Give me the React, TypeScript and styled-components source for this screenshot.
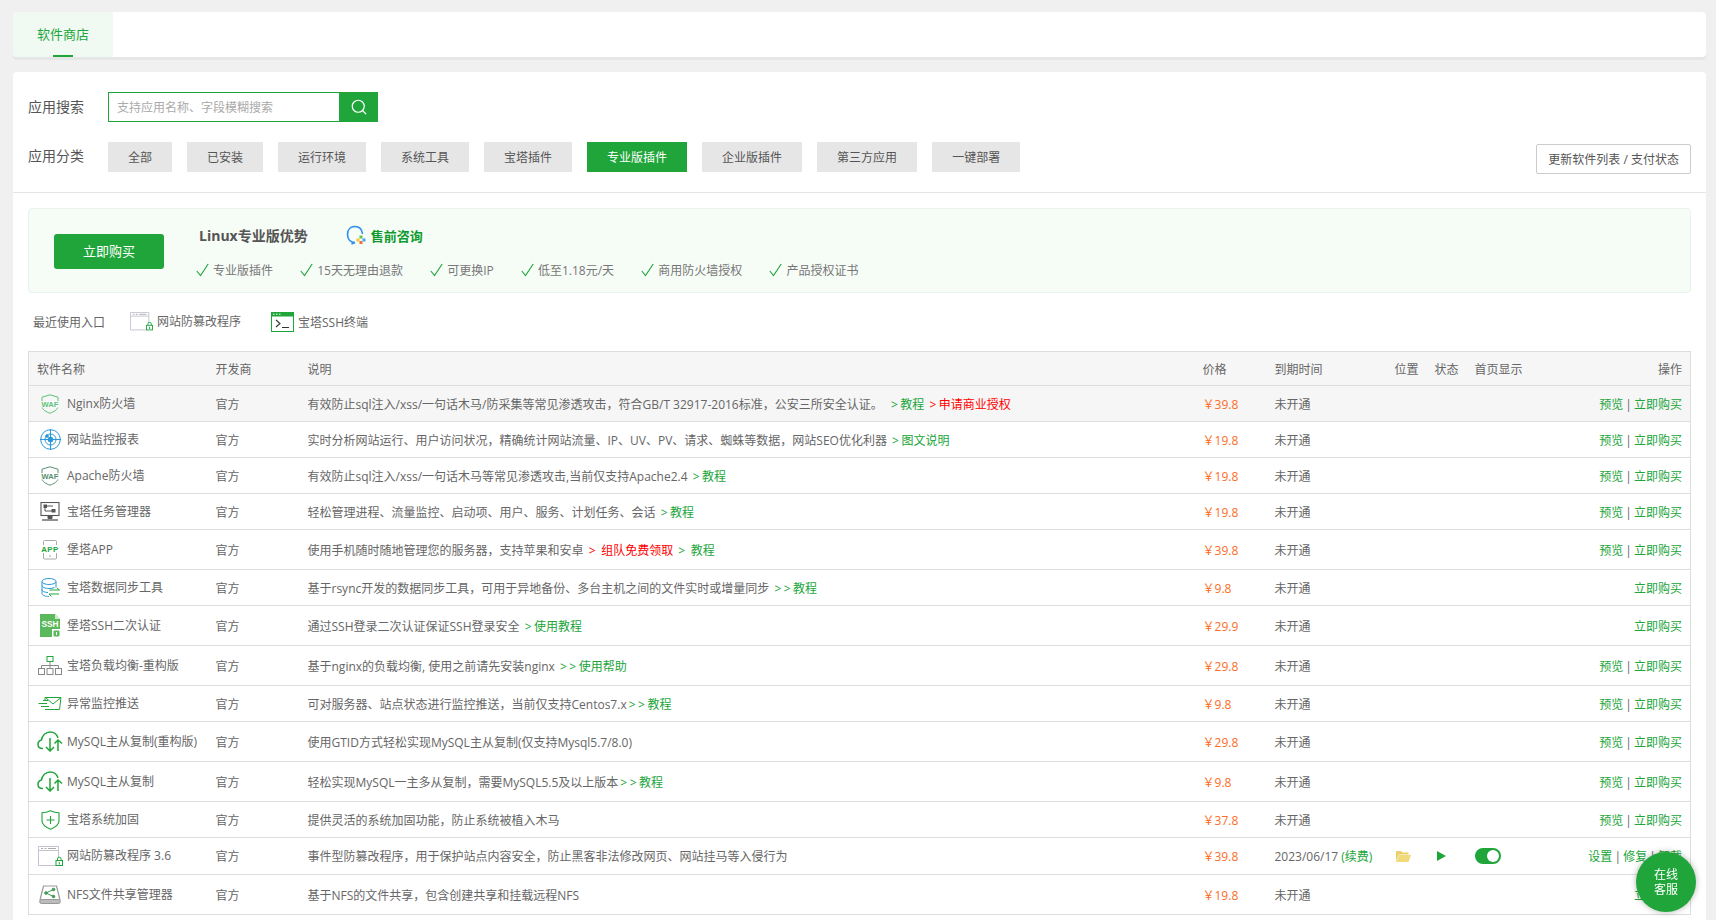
import { ReactNode } from "react";
import styled, { createGlobalStyle } from "styled-components";
import { Search } from "lucide-react";

const GREEN = "#20a53a";

const GlobalStyle = createGlobalStyle`
  html, body {
    margin: 0;
    height: 920px;
    overflow: hidden;
    background: #f0f0f0;
    color: #666;
    font-family: "Open Sans", "Noto Sans CJK SC", sans-serif;
    font-size: 12px;
  }
  * { box-sizing: border-box; }
`;

const Page = styled.div`
  padding: 12px 10px 0 13px;
`;

const TabCard = styled.div`
  height: 45px;
  background: #fff;
  border-radius: 4px;
  box-shadow: 0 3px 0 #e6e6e6;
  margin-bottom: 15px;
  overflow: hidden;
`;

const Tab = styled.div`
  position: relative;
  width: 100px;
  height: 45px;
  background: #f0f9f2;
  color: ${GREEN};
  font-size: 13px;
  line-height: 44px;
  text-align: center;
  &::after {
    content: "";
    position: absolute;
    left: 40px;
    bottom: 0;
    width: 20px;
    height: 2px;
    background: ${GREEN};
  }
`;

const MainCard = styled.div`
  background: #fff;
  border-radius: 4px 4px 0 0;
  height: 860px;
`;

const FilterBlock = styled.div`
  padding: 20px 15px 18px 15px;
  border-bottom: 1px solid #e4e4e4;
`;

const SearchRow = styled.div`
  display: flex;
  align-items: center;
  height: 30px;
  margin-bottom: 20px;
`;

const CategoryRow = styled.div`
  display: flex;
  align-items: flex-start;
  height: 32px;
`;

const RowLabel = styled.span`
  width: 80px;
  font-size: 14px;
  color: #555;
  padding-bottom: 2px;
`;

const CategoryLabel = styled(RowLabel)`
  padding-bottom: 0;
  line-height: 28px;
`;

const SearchBox = styled.div`
  display: flex;
  width: 270px;
  height: 30px;
  border: 1px solid ${GREEN};
`;

const SearchInput = styled.input`
  flex: 1;
  min-width: 0;
  border: 0;
  outline: 0;
  padding: 1px 0 0 8px;
  font: inherit;
  color: #666;
  &::placeholder {
    color: #aaa;
    opacity: 1;
  }
`;

const SearchButton = styled.div`
  width: 39px;
  margin: -1px -1px -1px 0;
  background: ${GREEN};
  color: #fff;
  display: flex;
  align-items: center;
  justify-content: center;
`;

const Categories = styled.div`
  display: flex;
  gap: 15px;
`;

const Category = styled.div<{ $active?: boolean }>`
  height: 30px;
  line-height: 31px;
  padding: 0 20px;
  background: ${(p) => (p.$active ? GREEN : "#e6e6e6")};
  color: ${(p) => (p.$active ? "#fff" : "#555")};
`;

const RefreshButton = styled.div`
  margin-left: auto;
  margin-top: 2px;
  height: 30px;
  line-height: 29px;
  padding: 0 11px;
  border: 1px solid #ccc;
  border-radius: 2px;
  color: #555;
  white-space: nowrap;
`;

const Content = styled.div`
  padding: 15px 15px 0;
`;

const Banner = styled.div`
  display: flex;
  align-items: center;
  height: 85px;
  padding: 1px 0 0 25px;
  background: #f6fcf6;
  border: 1px solid #e8f2ee;
  border-radius: 4px;
`;

const BuyButton = styled.div`
  width: 110px;
  height: 35px;
  line-height: 35px;
  text-align: center;
  background: ${GREEN};
  color: #fff;
  font-size: 13px;
  border-radius: 3px;
`;

const BannerInfo = styled.div`
  align-self: flex-start;
  margin: 15px 0 0 32px;
`;

const BannerTitleRow = styled.div`
  display: flex;
  align-items: center;
  height: 20px;
  padding-left: 3px;
  margin-bottom: 15px;
`;

const BannerTitle = styled.strong`
  font-size: 14px;
  color: #555;
  margin-right: 38px;
`;

const ConsultLink = styled.strong`
  font-size: 13px;
  color: #0f9a2e;
  margin-left: 5px;
`;

const Features = styled.div`
  display: flex;
  gap: 27.2px;
`;

const Feature = styled.div`
  display: flex;
  align-items: center;
  gap: 4px;
  height: 20px;
  color: #777;
`;

const RecentRow = styled.div`
  display: flex;
  align-items: center;
  height: 58px;
  padding: 0 0 1px 5px;
  color: #666;
`;

const RecentItem = styled.div`
  display: flex;
  align-items: center;
  gap: 4px;
  margin-left: 25px;
  padding-right: 5px;
`;

const Table = styled.table`
  width: 100%;
  table-layout: fixed;
  border-collapse: collapse;
  border: 1px solid #ddd;
`;

const HeadRow = styled.tr`
  height: 34px;
  background: #f6f6f6;
  border-bottom: 1px solid #ddd;
`;

const Row = styled.tr<{ $height: number; $hover?: boolean }>`
  height: ${(p) => p.$height}px;
  background: ${(p) => (p.$hover ? "#f6f6f6" : "#fff")};
  border-bottom: 1px solid #ddd;
`;

const Th = styled.th<{ $right?: boolean }>`
  padding: 0 8px;
  font-weight: 400;
  color: #666;
  text-align: ${(p) => (p.$right ? "right" : "left")};
  white-space: nowrap;
`;

const Td = styled.td`
  padding: 0 8px;
  color: #666;
  white-space: nowrap;
`;

const ActionsTd = styled(Td)`
  text-align: right;
  word-spacing: -1px;
`;

const NameCell = styled.div`
  display: flex;
  align-items: center;
  gap: 4px;
`;

const NameIcon = styled.span`
  flex: none;
  width: 26px;
  display: flex;
  justify-content: center;
`;

const NameText = styled.span`
  padding-bottom: 2px;
  color: #666;
`;

const Price = styled.span`
  color: #fc6d26;
`;

const TextLink = styled.span<{ $red?: boolean }>`
  color: ${(p) => (p.$red ? "#ff0000" : GREEN)};
`;

const DescLink = styled(TextLink)`
  margin-left: 2px;
`;

const Arrow = styled.span`
  letter-spacing: 2.5px;
`;

const Centered = styled.div`
  display: flex;
  align-items: center;
`;

const Toggle = styled.div`
  position: relative;
  width: 26px;
  height: 16px;
  border-radius: 8px;
  background: ${GREEN};
  &::after {
    content: "";
    position: absolute;
    top: 2px;
    right: 2px;
    width: 12px;
    height: 12px;
    border-radius: 50%;
    background: #fff;
  }
`;

const ChatBubble = styled.div`
  position: fixed;
  right: 20px;
  bottom: 8px;
  width: 60px;
  height: 60px;
  padding-top: 15px;
  border-radius: 50%;
  background: ${GREEN};
  color: #fff;
  font-size: 12px;
  line-height: 15px;
  text-align: center;
  box-shadow: 0 0 6px rgba(0, 0, 0, 0.3);
`;

function CheckMark() {
  return (
    <svg width="13" height="14" viewBox="0 0 13 14">
      <path d="M0.8 8l3.7 4.6L12.2 1" fill="none" stroke={GREEN} strokeWidth="1.1" />
    </svg>
  );
}

function ConsultIcon() {
  return (
    <svg width="20" height="20" viewBox="0 0 20 20">
      <path d="M9 17.5c-4.2 0-7.5-2.6-7.5-8S4.800 1.500 9 1.500s7 3 7.500 7.500" fill="none" stroke="#2b8ff0" strokeWidth="1.600" />
      <path d="M9 17.500l-3.500 1.500" stroke="#2b8ff0" strokeWidth="1.600" />
      <rect x="13.500" y="10.500" width="3" height="3" fill="#6cc04a" />
      <rect x="10.500" y="13.500" width="3" height="3" fill="#f5c33b" />
      <rect x="13.500" y="16" width="3" height="3" fill="#f0703a" />
      <rect x="16.500" y="13.500" width="3" height="3" fill="#4aa3f0" />
    </svg>
  );
}

function WafIcon({ color }: { color: string }) {
  return (
    <svg width="18" height="20" viewBox="0 0 18 20">
      <path d="M9 0.800L17 3.200V12.500C17 15.500 12.500 18 9 19.200C5.500 18 1 15.500 1 12.500V3.200Z" fill="none" stroke={color} strokeWidth="1" />
      <rect x="0" y="7" width="18" height="6.500" fill="#fff" opacity="0.85" />
      <text x="9" y="12.900" fontSize="7.600" fontWeight="700" fill={color} textAnchor="middle" fontFamily="Liberation Sans, sans-serif">WAF</text>
    </svg>
  );
}

function MonitorTargetIcon() {
  return (
    <svg width="21" height="21" viewBox="0 0 21 21" fill="none" stroke="#2a97d8" strokeWidth="1">
      <circle cx="10.500" cy="10.500" r="9.800" />
      <circle cx="10.500" cy="10.500" r="5.500" />
      <path d="M10.500 0v21M0 10.500h21" />
      <circle cx="10.500" cy="10.500" r="2.500" fill="#2a97d8" />
      <circle cx="7" cy="7" r="1.300" fill="#2a97d8" />
    </svg>
  );
}

function TaskIcon() {
  return (
    <svg width="20" height="19" viewBox="0 0 20 19" fill="none" stroke="#555">
      <rect x="1" y="0.500" width="18" height="13" strokeWidth="1.100" />
      <rect x="4" y="3" width="2.500" height="2.500" fill="#555" />
      <rect x="12" y="7.500" width="3" height="2.500" fill="#555" />
      <path d="M7 4h6M5 6v3h7" strokeWidth="1" />
      <path d="M8 14v2.500h4V14" fill="#555" />
      <path d="M2 18h16" strokeWidth="1.300" />
    </svg>
  );
}

function AppIcon() {
  return (
    <svg width="18" height="20" viewBox="0 0 18 20">
      <rect x="2.500" y="0.500" width="13" height="18.500" rx="1" fill="none" stroke="#aaa" />
      <rect x="0" y="5" width="18" height="8" fill="#fff" />
      <text x="9" y="11.800" fontSize="7.800" fontWeight="700" fill={GREEN} textAnchor="middle" letterSpacing="0.500" fontFamily="Liberation Sans, sans-serif">APP</text>
      <rect x="8.500" y="15.500" width="1.200" height="1.200" fill="#888" />
    </svg>
  );
}

function DatabaseIcon() {
  return (
    <svg width="19" height="20" viewBox="0 0 19 20" fill="none" strokeWidth="1">
      <ellipse cx="8" cy="3.500" rx="7" ry="3" stroke="#2a97d8" />
      <path d="M1 3.500v12c0 1.800 3.500 3 7 3M1 7.500c0 1.700 3 3 7 3 2 0 4-.3 5.500-1M1 11.500c0 1.700 3 3 6 3M15 3.500v6" stroke="#2a97d8" />
      <path d="M8.500 12h10l-2.500-2M18 16H8l2.500 2.500" stroke={GREEN} />
    </svg>
  );
}

function SshIcon() {
  return (
    <svg width="21" height="24" viewBox="0 0 21 24">
      <path d="M0 0H15L20 5V23H0Z" fill="#5cb85c" />
      <path d="M15 0V5H20" fill="#fff" opacity="0.700" />
      <text x="1.500" y="12.500" fontSize="9.500" fontWeight="700" fill="#fff" fontFamily="Liberation Sans Narrow, Liberation Sans, sans-serif" textLength="17" lengthAdjust="spacingAndGlyphs">SSH</text>
      <rect x="12" y="15" width="9" height="9" fill="#fff" />
      <rect x="13.500" y="16.500" width="6" height="6" rx="1" fill="#5cb85c" />
      <path d="M16.500 18v3" stroke="#fff" />
    </svg>
  );
}

function TreeIcon() {
  return (
    <svg width="24" height="19" viewBox="0 0 24 19" fill="none" stroke="#888">
      <rect x="9" y="0.500" width="6" height="5" stroke={GREEN} />
      <path d="M12 5.500v4M3.500 12V9.500h17V12M12 9.500V12" />
      <rect x="0.500" y="12.500" width="6" height="6" />
      <rect x="9" y="12.500" width="6" height="6" />
      <rect x="17.500" y="12.500" width="6" height="6" />
    </svg>
  );
}

function MailIcon() {
  return (
    <svg width="24" height="13" viewBox="0 0 24 13" fill="none" stroke={GREEN}>
      <path d="M7 3V0.500H23L21.500 12.500H7" />
      <path d="M8 1l7 6 8-6.500" />
      <path d="M0.500 6.500H9M3 9.500H11M5 3.500h5" />
    </svg>
  );
}

function CloudSyncIcon() {
  return (
    <svg width="26" height="21" viewBox="0 0 26 21" fill="none" stroke={GREEN} strokeWidth="1.500">
      <path d="M6 17.500C3 18 1 16 1 13.500c0-2.500 1.500-4 3.500-4.500C5 4.500 9 1 13 1c4 0 7 2.500 8 6" />
      <path d="M13 7v13M9 16l4 4 4-4" />
      <path d="M21 20V9M17.500 12.500L21 9l4 3.500" />
    </svg>
  );
}

function ShieldPlusIcon() {
  return (
    <svg width="19" height="20" viewBox="0 0 19 20" fill="none" stroke={GREEN} strokeWidth="1.100">
      <path d="M9.500 0.800C13 2.500 15.500 2.800 18 2.800V11C18 15 13.500 17.500 9.500 19.200C5.500 17.500 1 15 1 11V2.800C3.500 2.800 6 2.500 9.500 0.800Z" />
      <path d="M5.500 10h8M9.500 6v8" />
    </svg>
  );
}

function BrowserLockIcon({ width = 25 }: { width?: number }) {
  return (
    <svg width={width} viewBox="0 0 25 20" fill="none" stroke="#c3c3d3">
      <path d="M18 19.500H0.500V0.500H20.500V12" />
      <path d="M0.500 4.500H20.500" />
      <path d="M3 2.500h2M6.500 2.500h2M10 2.500h8" stroke="#aaa" />
      <rect x="18" y="14.500" width="6.500" height="5" stroke={GREEN} fill="#fff" />
      <path d="M19.500 14.500v-1.500a1.800 1.800 0 013.600 0v1.500M21.300 16v2.500" stroke={GREEN} />
    </svg>
  );
}

function TerminalIcon() {
  return (
    <svg width="23" height="20" viewBox="0 0 23 20">
      <rect x="0.500" y="0.500" width="22" height="19" fill="#fff" stroke={GREEN} />
      <rect x="0" y="0" width="23" height="4.500" fill={GREEN} />
      <path d="M2 2.200h1.500M5 2.200h1.500M8 2.200h1.500" stroke="#fff" />
      <path d="M5 8l4 3.500L5 15M11 15.500h7" fill="none" stroke="#333" strokeWidth="1.100" />
    </svg>
  );
}

function NfsIcon() {
  return (
    <svg width="22" height="19" viewBox="0 0 22 19" fill="none" stroke="#999">
      <path d="M1 15L4.500 1H17.500L21 15" strokeWidth="1.200" />
      <rect x="0.800" y="14.500" width="20.400" height="4" rx="1.500" fill="#bbb" />
      <g stroke="#3f9a52">
        <circle cx="7" cy="8" r="1.300" fill="#3f9a52" />
        <circle cx="14.500" cy="4.500" r="1.300" fill="#3f9a52" />
        <circle cx="14.500" cy="11.500" r="1.300" fill="#3f9a52" />
        <path d="M7 8l7.500-3.500M7 8l7.500 3.500" />
      </g>
    </svg>
  );
}

function FolderIcon() {
  return (
    <svg width="16" height="11" viewBox="-1 0 16 11">
      <path d="M0 1.200C0 .5.500 0 1 0H5L6.500 1.500H12.500V3.500H3L0 10Z" fill="#e9d06a" />
      <path d="M3.200 4H15L12.500 11H0Z" fill="#f0da7a" />
    </svg>
  );
}

function PlayIcon() {
  return (
    <svg width="11" height="10" viewBox="-2 0 11 10">
      <path d="M0 0L9 5L0 10Z" fill={GREEN} />
    </svg>
  );
}

type Plugin = {
  name: string;
  icon: ReactNode;
  desc: ReactNode;
  price: string;
  height: number;
  preview?: boolean;
};

const plugins: Plugin[] = [
  {
    name: "Nginx防火墙",
    icon: <WafIcon color="#5cbf76" />,
    desc: (
      <>
        有效防止sql注入/xss/一句话木马/防采集等常见渗透攻击，符合GB/T 32917-2016标准，公安三所安全认证。 &nbsp;
        <DescLink>
          <Arrow>&gt;</Arrow>教程
        </DescLink>{" "}
        <DescLink $red>
          <Arrow>&gt;</Arrow>申请商业授权
        </DescLink>
      </>
    ),
    price: "39.8",
    height: 36,
    preview: true,
  },
  {
    name: "网站监控报表",
    icon: <MonitorTargetIcon />,
    desc: (
      <>
        实时分析网站运行、用户访问状况，精确统计网站流量、IP、UV、PV、请求、蜘蛛等数据，网站SEO优化利器
        <DescLink>
          {" "}
          <Arrow>&gt;</Arrow>图文说明
        </DescLink>
      </>
    ),
    price: "19.8",
    height: 36,
    preview: true,
  },
  {
    name: "Apache防火墙",
    icon: <WafIcon color="#5a9070" />,
    desc: (
      <>
        有效防止sql注入/xss/一句话木马等常见渗透攻击,当前仅支持Apache2.4{" "}
        <DescLink>
          <Arrow>&gt;</Arrow>教程
        </DescLink>
      </>
    ),
    price: "19.8",
    height: 36,
    preview: true,
  },
  {
    name: "宝塔任务管理器",
    icon: <TaskIcon />,
    desc: (
      <>
        轻松管理进程、流量监控、启动项、用户、服务、计划任务、会话{" "}
        <DescLink>
          <Arrow>&gt;</Arrow>教程
        </DescLink>
      </>
    ),
    price: "19.8",
    height: 36,
    preview: true,
  },
  {
    name: "堡塔APP",
    icon: <AppIcon />,
    desc: (
      <>
        使用手机随时随地管理您的服务器，支持苹果和安卓{" "}
        <DescLink $red>
          <Arrow>&gt;</Arrow> 组队免费领取
        </DescLink>{" "}
        <DescLink>
          <Arrow>&gt;</Arrow> 教程
        </DescLink>
      </>
    ),
    price: "39.8",
    height: 40,
    preview: true,
  },
  {
    name: "宝塔数据同步工具",
    icon: <DatabaseIcon />,
    desc: (
      <>
        基于rsync开发的数据同步工具，可用于异地备份、多台主机之间的文件实时或增量同步{" "}
        <DescLink>
          <Arrow>&gt;&gt;</Arrow>教程
        </DescLink>
      </>
    ),
    price: "9.8",
    height: 36,
  },
  {
    name: "堡塔SSH二次认证",
    icon: <SshIcon />,
    desc: (
      <>
        通过SSH登录二次认证保证SSH登录安全{" "}
        <DescLink>
          <Arrow>&gt;</Arrow>使用教程
        </DescLink>
      </>
    ),
    price: "29.9",
    height: 40,
  },
  {
    name: "宝塔负载均衡-重构版",
    icon: <TreeIcon />,
    desc: (
      <>
        基于nginx的负载均衡, 使用之前请先安装nginx{" "}
        <DescLink>
          <Arrow>&gt;&gt;</Arrow>使用帮助
        </DescLink>
      </>
    ),
    price: "29.8",
    height: 40,
    preview: true,
  },
  {
    name: "异常监控推送",
    icon: <MailIcon />,
    desc: (
      <>
        可对服务器、站点状态进行监控推送，当前仅支持Centos7.x
        <DescLink>
          <Arrow>&gt;&gt;</Arrow>教程
        </DescLink>
      </>
    ),
    price: "9.8",
    height: 36,
    preview: true,
  },
  {
    name: "MySQL主从复制(重构版)",
    icon: <CloudSyncIcon />,
    desc: "使用GTID方式轻松实现MySQL主从复制(仅支持Mysql5.7/8.0)",
    price: "29.8",
    height: 40,
    preview: true,
  },
  {
    name: "MySQL主从复制",
    icon: <CloudSyncIcon />,
    desc: (
      <>
        轻松实现MySQL一主多从复制，需要MySQL5.5及以上版本
        <DescLink>
          <Arrow>&gt;&gt;</Arrow>教程
        </DescLink>
      </>
    ),
    price: "9.8",
    height: 40,
    preview: true,
  },
  {
    name: "宝塔系统加固",
    icon: <ShieldPlusIcon />,
    desc: "提供灵活的系统加固功能，防止系统被植入木马",
    price: "37.8",
    height: 36,
    preview: true,
  },
];

const categories = ["全部", "已安装", "运行环境", "系统工具", "宝塔插件", "专业版插件", "企业版插件", "第三方应用", "一键部署"];
const features = ["专业版插件", "15天无理由退款", "可更换IP", "低至1.18元/天", "商用防火墙授权", "产品授权证书"];

function ColumnWidths() {
  return (
    <colgroup>
      <col style={{ width: 179 }} />
      <col style={{ width: 92 }} />
      <col style={{ width: 895 }} />
      <col style={{ width: 72 }} />
      <col style={{ width: 120 }} />
      <col style={{ width: 40 }} />
      <col style={{ width: 40 }} />
      <col style={{ width: 80 }} />
      <col />
    </colgroup>
  );
}

export default function App() {
  return (
    <Page>
      <GlobalStyle />
      <TabCard>
        <Tab>软件商店</Tab>
      </TabCard>
      <MainCard>
        <FilterBlock>
          <SearchRow>
            <RowLabel>应用搜索</RowLabel>
            <SearchBox>
              <SearchInput placeholder="支持应用名称、字段模糊搜索" />
              <SearchButton>
                <Search size={18} strokeWidth={1.6} />
              </SearchButton>
            </SearchBox>
          </SearchRow>
          <CategoryRow>
            <CategoryLabel>应用分类</CategoryLabel>
            <Categories>
              {categories.map((c) => (
                <Category key={c} $active={c === "专业版插件"}>
                  {c}
                </Category>
              ))}
            </Categories>
            <RefreshButton>更新软件列表 / 支付状态</RefreshButton>
          </CategoryRow>
        </FilterBlock>
        <Content>
          <Banner>
            <BuyButton>立即购买</BuyButton>
            <BannerInfo>
              <BannerTitleRow>
                <BannerTitle>Linux专业版优势</BannerTitle>
                <ConsultIcon />
                <ConsultLink>售前咨询</ConsultLink>
              </BannerTitleRow>
              <Features>
                {features.map((f) => (
                  <Feature key={f}>
                    <CheckMark />
                    {f}
                  </Feature>
                ))}
              </Features>
            </BannerInfo>
          </Banner>
          <RecentRow>
            最近使用入口
            <RecentItem>
              <BrowserLockIcon width={23} />
              网站防篡改程序
            </RecentItem>
            <RecentItem>
              <TerminalIcon />
              宝塔SSH终端
            </RecentItem>
          </RecentRow>
          <Table>
            <ColumnWidths />
            <thead>
              <HeadRow>
                <Th>软件名称</Th>
                <Th>开发商</Th>
                <Th>说明</Th>
                <Th>价格</Th>
                <Th>到期时间</Th>
                <Th>位置</Th>
                <Th>状态</Th>
                <Th>首页显示</Th>
                <Th $right>操作</Th>
              </HeadRow>
            </thead>
            <tbody>
              {plugins.map((p, i) => (
                <Row key={p.name} $height={p.height} $hover={i === 0}>
                  <Td>
                    <NameCell>
                      <NameIcon>{p.icon}</NameIcon>
                      <NameText>{p.name}</NameText>
                    </NameCell>
                  </Td>
                  <Td>官方</Td>
                  <Td>{p.desc}</Td>
                  <Td>
                    <Price>￥{p.price}</Price>
                  </Td>
                  <Td>未开通</Td>
                  <Td />
                  <Td />
                  <Td />
                  <ActionsTd>
                    {p.preview && (
                      <>
                        <TextLink>预览</TextLink> |{" "}
                      </>
                    )}
                    <TextLink>立即购买</TextLink>
                  </ActionsTd>
                </Row>
              ))}
              <Row $height={37}>
                <Td>
                  <NameCell>
                    <NameIcon>
                      <BrowserLockIcon />
                    </NameIcon>
                    <NameText>网站防篡改程序 3.6</NameText>
                  </NameCell>
                </Td>
                <Td>官方</Td>
                <Td>事件型防篡改程序，用于保护站点内容安全，防止黑客非法修改网页、网站挂马等入侵行为</Td>
                <Td>
                  <Price>￥39.8</Price>
                </Td>
                <Td>
                  2023/06/17 <TextLink>(续费)</TextLink>
                </Td>
                <Td>
                  <Centered>
                    <FolderIcon />
                  </Centered>
                </Td>
                <Td>
                  <Centered>
                    <PlayIcon />
                  </Centered>
                </Td>
                <Td>
                  <Toggle />
                </Td>
                <ActionsTd>
                  <TextLink>设置</TextLink> | <TextLink>修复</TextLink> | <TextLink>卸载</TextLink>
                </ActionsTd>
              </Row>
              <Row $height={40}>
                <Td>
                  <NameCell>
                    <NameIcon>
                      <NfsIcon />
                    </NameIcon>
                    <NameText>NFS文件共享管理器</NameText>
                  </NameCell>
                </Td>
                <Td>官方</Td>
                <Td>基于NFS的文件共享，包含创建共享和挂载远程NFS</Td>
                <Td>
                  <Price>￥19.8</Price>
                </Td>
                <Td>未开通</Td>
                <Td />
                <Td />
                <Td />
                <ActionsTd>
                  <TextLink>立即购买</TextLink>
                </ActionsTd>
              </Row>
            </tbody>
          </Table>
        </Content>
      </MainCard>
      <ChatBubble>
        在线
        <br />
        客服
      </ChatBubble>
    </Page>
  );
}
